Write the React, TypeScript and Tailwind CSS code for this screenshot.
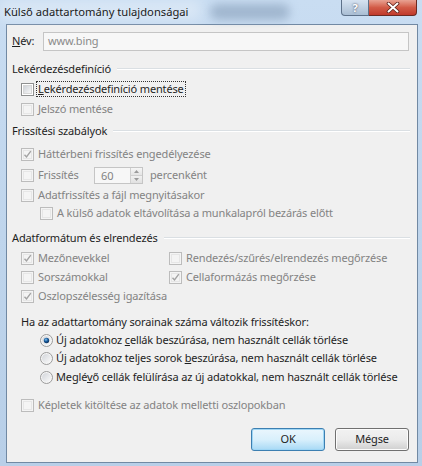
import React from "react";

const FONT = { fontFamily: '"Noto Sans", "Open Sans", sans-serif' };

function CheckMark({ color }: { color: string }) {
  return (
    <svg width="11" height="11" viewBox="0 0 11 11" className="absolute left-[0px] top-[0px]">
      <path d="M2.5 5.8 L4.5 8 L8.8 2.2" fill="none" stroke={color} strokeWidth="1.4" />
    </svg>
  );
}

function Box({ checked = false, disabled = false }: { checked?: boolean; disabled?: boolean }) {
  return (
    <span
      className={
        "relative inline-block w-[13px] h-[13px] shrink-0 border " +
        (disabled ? "border-[#bcbcbc] bg-[#f4f4f4]" : "border-[#8e8f8f] bg-white")
      }
    >
      <span
        className={
          "absolute left-[1px] top-[1px] w-[9px] h-[9px] " +
          (disabled
            ? "bg-[#f4f4f4] border border-[#e6e6e6]"
            : "bg-gradient-to-br from-[#cfd3d8] to-[#f7f7f7] border border-[#d6d6d6]")
        }
      />
      {checked && <CheckMark color={disabled ? "#a3a3a3" : "#4a5f97"} />}
    </span>
  );
}

function Radio({ selected = false }: { selected?: boolean }) {
  return (
    <svg width="13" height="13" viewBox="0 0 13 13" className="shrink-0">
      <defs>
        <linearGradient id="rb" x1="0" y1="0" x2="1" y2="1">
          <stop offset="0" stopColor="#d2d5da" />
          <stop offset="1" stopColor="#fafafa" />
        </linearGradient>
        <radialGradient id="rd" cx="0.4" cy="0.35" r="0.7">
          <stop offset="0" stopColor="#7fc3f3" />
          <stop offset="0.5" stopColor="#1a5b9b" />
          <stop offset="1" stopColor="#0b2a52" />
        </radialGradient>
      </defs>
      <circle cx="6.5" cy="6.5" r="6" fill="#f6f6f6" stroke="#9a9a9a" strokeWidth="1" />
      <circle cx="6.5" cy="6.5" r="4.5" fill="url(#rb)" />
      {selected && <circle cx="6.5" cy="6.5" r="2.7" fill="url(#rd)" />}
    </svg>
  );
}

function Heading({ children }: { children: React.ReactNode }) {
  return (
    <div className="h-[18px] flex items-center pl-[5px] pr-[7px] gap-[6px]">
      <span className="text-[#1e1e1e] whitespace-nowrap">{children}</span>
      <span className="flex-1 h-[2px] border-t border-[#dadfe3] border-b-white border-b" />
    </div>
  );
}

function CheckRow({
  label,
  checked,
  disabled,
  indent = "pl-[14px]",
  focus,
  mt,
}: {
  label: React.ReactNode;
  checked?: boolean;
  disabled?: boolean;
  indent?: string;
  focus?: boolean;
  mt: string;
}) {
  return (
    <div className={"h-[18px] flex items-center " + indent + " " + mt}>
      <Box checked={checked} disabled={disabled} />
      <span
        className={
          "ml-[3px] px-[1px] leading-[14px] whitespace-nowrap " +
          (disabled ? "text-[#838383]" : "text-[#1e1e1e]") +
          (focus ? " outline outline-1 outline-dotted outline-[#333]" : "")
        }
      >
        {label}
      </span>
    </div>
  );
}

function RadioRow({ label, selected, mt }: { label: React.ReactNode; selected?: boolean; mt: string }) {
  return (
    <div className={"h-[18px] flex items-center pl-[33px] gap-[3px] " + mt}>
      <Radio selected={selected} />
      <span className="text-[#1e1e1e] whitespace-nowrap">{label}</span>
    </div>
  );
}

export default function App() {
  return (
    <div
      className="relative w-[422px] h-[466px] overflow-hidden bg-gradient-to-b from-[#c9ddf2] via-[#bfd5ec] to-[#b8cfe8] text-[11px] tracking-[-0.15px]"
      style={FONT}
    >
      {/* blurred background blob behind title */}
      <div className="absolute left-[210px] top-[4px] w-[80px] h-[16px] rounded-full bg-[#8fa6c0] blur-[5px] opacity-70" />
      <div className="absolute left-0 top-0 w-[200px] h-[20px] bg-white/30 blur-[6px]" />

      {/* title bar */}
      <div className="relative h-[24px] flex items-center pl-[4px] text-[11.2px] tracking-normal text-[#1a1a1a]">
        Külső adattartomány tulajdonságai
      </div>

      {/* caption buttons */}
      <div className="absolute top-0 right-[5px] flex">
        <div className="w-[28px] h-[16px] rounded-bl-[4px] border border-t-0 border-[#5d7189] bg-gradient-to-b from-[#d6e3f1] to-[#a9bdd3] flex items-center justify-center text-[11px] font-bold text-white leading-none [text-shadow:0_0_2px_#334]">
          ?
        </div>
        <div className="w-[48px] h-[16px] rounded-br-[4px] border border-t-0 border-l-0 border-[#6b2a22] bg-gradient-to-b from-[#e8a293] via-[#d25b47] to-[#c0392b] flex items-center justify-center">
          <svg width="14" height="11" viewBox="0 0 14 11">
            <path d="M2.5 1.5 L11.5 9.5 M11.5 1.5 L2.5 9.5" stroke="#5a1e18" strokeWidth="3.6" strokeLinecap="round" />
            <path d="M2.5 1.5 L11.5 9.5 M11.5 1.5 L2.5 9.5" stroke="#ffffff" strokeWidth="2" strokeLinecap="round" />
          </svg>
        </div>
      </div>

      {/* client area */}
      <div className="ml-[6px] w-[412px] h-[439px] border border-[#7189a3] bg-[#f0f0f0] flex flex-col">
        {/* name */}
        <div className="mt-[7px] h-[19px] flex items-center pl-[5px]">
          <span className="w-[31px] text-[#1e1e1e]">
            <span className="underline">N</span>év:
          </span>
          <div className="w-[366px] h-[19px] border border-[#c5c5c5] bg-[#f7f7f7] flex items-center pl-[4px] text-[#8a8a8a]">
            www.bing
          </div>
        </div>

        <div className="mt-[9px]">
          <Heading>Lekérdezésdefiníció</Heading>
        </div>
        <CheckRow
          mt="mt-[2px]"
          focus
          label={
            <>
              <span className="underline">L</span>ekérdezésdefiníció mentése
            </>
          }
        />
        <CheckRow mt="mt-[2px]" disabled label="Jelszó mentése" />

        <div className="mt-[4px]">
          <Heading>Frissítési szabályok</Heading>
        </div>
        <CheckRow mt="mt-[5px]" checked disabled label="Háttérbeni frissítés engedélyezése" />
        <div className="mt-[3px] h-[18px] flex items-center pl-[14px]">
          <Box disabled />
          <span className="ml-[3px] px-[1px] text-[#838383] w-[57px]">Frissítés</span>
          <div className="w-[49px] h-[17px] border border-[#c5c5c5] bg-[#f7f7f7] flex">
            <span className="flex-1 pl-[6px] leading-[15px] text-[#838383]">60</span>
            <div className="w-[12px] flex flex-col border-l border-[#d0d0d0]">
              <div className="flex-1 flex items-center justify-center bg-gradient-to-b from-[#f6f6f6] to-[#e4e4e4] border-b border-[#d0d0d0]">
                <svg width="5" height="3" viewBox="0 0 5 3">
                  <path d="M0 3 L2.5 0 L5 3 Z" fill="#9a9a9a" />
                </svg>
              </div>
              <div className="flex-1 flex items-center justify-center bg-gradient-to-b from-[#f1f1f1] to-[#e0e0e0]">
                <svg width="5" height="3" viewBox="0 0 5 3">
                  <path d="M0 0 L2.5 3 L5 0 Z" fill="#9a9a9a" />
                </svg>
              </div>
            </div>
          </div>
          <span className="ml-[7px] text-[#838383]">percenként</span>
        </div>
        <CheckRow mt="mt-[2px]" disabled label="Adatfrissítés a fájl megnyitásakor" />
        <CheckRow mt="mt-[0px]" indent="pl-[33px]" disabled label="A külső adatok eltávolítása a munkalapról bezárás előtt" />

        <div className="mt-[7px]">
          <Heading>Adatformátum és elrendezés</Heading>
        </div>
        <div className="mt-[2px] grid grid-cols-[162px_1fr] gap-y-[1px]">
          <CheckRow mt="mt-0" checked disabled label="Mezőnevekkel" />
          <CheckRow mt="mt-0" indent="pl-0" disabled label="Rendezés/szűrés/elrendezés megőrzése" />
          <CheckRow mt="mt-0" disabled label="Sorszámokkal" />
          <CheckRow mt="mt-0" indent="pl-0" checked disabled label="Cellaformázás megőrzése" />
          <CheckRow mt="mt-0" checked disabled label="Oszlopszélesség igazítása" />
        </div>

        <div className="mt-[8px] h-[18px] flex items-center pl-[14px] text-[#1e1e1e] whitespace-nowrap">
          Ha az adattartomány sorainak száma változik frissítéskor:
        </div>
        <RadioRow
          mt="mt-0"
          selected
          label={
            <>
              Új adatokhoz <span className="underline">c</span>ellák beszúrása, nem használt cellák törlése
            </>
          }
        />
        <RadioRow
          mt="mt-0"
          label={
            <>
              Új adatokhoz teljes sorok <span className="underline">b</span>eszúrása, nem használt cellák törlése
            </>
          }
        />
        <RadioRow
          mt="mt-[1px]"
          label={
            <>
              Meglé<span className="underline">v</span>ő cellák felülírása az új adatokkal, nem használt cellák törlése
            </>
          }
        />

        <CheckRow mt="mt-[10px]" disabled label="Képletek kitöltése az adatok melletti oszlopokban" />

        <div className="mt-[14px] flex justify-end gap-[10px] pr-[8px]">
          <button className="w-[74px] h-[23px] rounded-[3px] border border-[#3c7fb1] bg-gradient-to-b from-[#eaf6fd] via-[#d9f0fc] to-[#a7d9f5] shadow-[inset_0_0_0_1px_#9fd6f5] text-[#1e1e1e]">
            OK
          </button>
          <button className="w-[74px] h-[23px] rounded-[3px] border border-[#707070] bg-gradient-to-b from-[#f2f2f2] via-[#ebebeb] to-[#cfcfcf] shadow-[inset_0_0_0_1px_#fcfcfc] text-[#1e1e1e]">
            Mégse
          </button>
        </div>
      </div>
    </div>
  );
}
